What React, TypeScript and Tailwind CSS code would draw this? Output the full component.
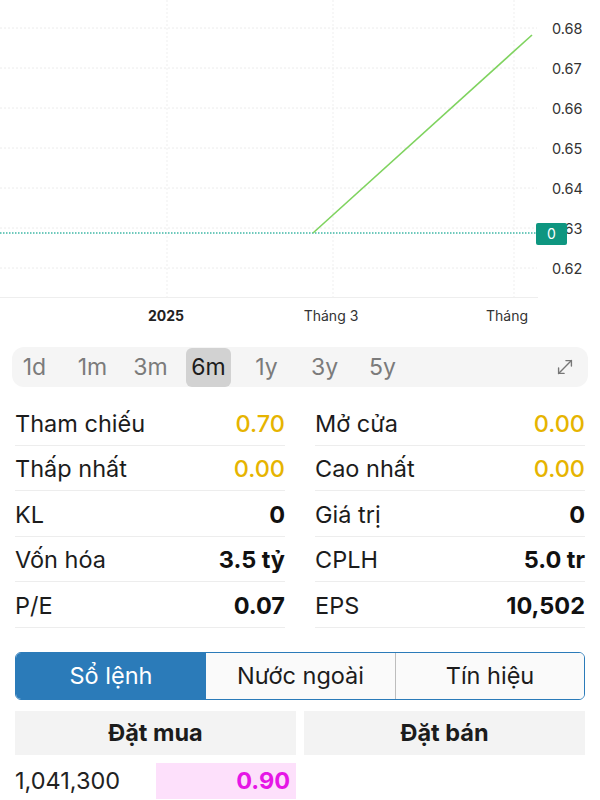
import { MoveDiagonal } from "lucide-react";

const periods = ["1d", "1m", "3m", "6m", "1y", "3y", "5y"];

const stats: [string, string, string, string, string, string][] = [
  ["Tham chiếu", "0.70", "text-[#e6b400] font-medium", "Mở cửa", "0.00", "text-[#e6b400] font-medium"],
  ["Thấp nhất", "0.00", "text-[#e6b400] font-medium", "Cao nhất", "0.00", "text-[#e6b400] font-medium"],
  ["KL", "0", "text-[#111] font-bold", "Giá trị", "0", "text-[#111] font-bold"],
  ["Vốn hóa", "3.5 tỷ", "text-[#111] font-bold", "CPLH", "5.0 tr", "text-[#111] font-bold"],
  ["P/E", "0.07", "text-[#111] font-bold", "EPS", "10,502", "text-[#111] font-bold"],
];

const yLabels = ["0.68", "0.67", "0.66", "0.65", "0.64", "0.63", "0.62"];

function Chart() {
  const font = "Inter, 'Noto Sans', sans-serif";
  return (
    <svg width="600" height="340" viewBox="0 0 600 340" className="block">
      {yLabels.map((_, i) => (
        <line key={i} x1="0" x2="537" y1={28 + i * 40} y2={28 + i * 40} stroke="#ececec" strokeWidth="1" strokeDasharray="2 2" />
      ))}
      {[167, 333, 514].map((x) => (
        <line key={x} x1={x} x2={x} y1="0" y2="297" stroke="#efefef" strokeWidth="1" strokeDasharray="2 2" />
      ))}
      <line x1="0" x2="538" y1="297.5" y2="297.5" stroke="#eeeeee" strokeWidth="1" />
      <line x1="0" x2="537" y1="233" y2="233" stroke="#3fb8a6" strokeWidth="1.5" strokeDasharray="1.5 1.5" />
      <line x1="313" y1="233" x2="532" y2="35" stroke="#7fd35f" strokeWidth="1.6" />
      {yLabels.map((l, i) => (
        <text key={l} x="552" y={34 + i * 40} fontSize="14.5" fill="#333" fontFamily={font}>
          {l}
        </text>
      ))}
      <rect x="536" y="223" width="31" height="22" rx="2" fill="#0e9680" />
      <text x="551.5" y="239" fontSize="14" fill="#fff" textAnchor="middle" fontFamily={font}>
        0
      </text>
      <text x="166" y="321" fontSize="14" fontWeight="700" fill="#222" textAnchor="middle" fontFamily={font}>
        2025
      </text>
      <text x="331" y="321" fontSize="14" fill="#333" textAnchor="middle" fontFamily={font}>
        Tháng 3
      </text>
      <text x="486" y="321" fontSize="14" fill="#333" fontFamily={font}>
        Tháng
      </text>
    </svg>
  );
}

export default function App() {
  return (
    <div className="w-[600px] h-[800px] overflow-hidden bg-white text-[#1c1c1c]" style={{ fontFamily: "Inter, 'Noto Sans', sans-serif" }}>
      <Chart />

      <div className="mx-3 mt-[7px] h-[40px] rounded-xl bg-[#f5f5f5] flex items-center pr-[12px]">
        <div className="flex items-center gap-[13px]">
          {periods.map((p) => (
            <div
              key={p}
              className={
                p === "6m"
                  ? "w-[45px] h-[39px] rounded-md bg-[#d2d2d2] flex items-center justify-center text-[23px] text-[#1c1c1c]"
                  : "w-[45px] h-[39px] flex items-center justify-center text-[23px] text-[#7b7b7b]"
              }
            >
              {p}
            </div>
          ))}
        </div>
        <MoveDiagonal className="ml-auto w-[22px] h-[22px] text-[#777]" strokeWidth={1.5} />
      </div>

      <div className="grid grid-cols-2 gap-x-[30px] px-[15px] mt-[13px]">
        {stats.map(([l1, v1, c1, l2, v2, c2]) => (
          <>
            <div key={l1} className="h-[45.5px] pt-[2px] flex items-center justify-between border-b border-[#ededed] text-[23.5px]">
              <span>{l1}</span>
              <span className={c1}>{v1}</span>
            </div>
            <div key={l2} className="h-[45.5px] pt-[2px] flex items-center justify-between border-b border-[#ededed] text-[23.5px]">
              <span>{l2}</span>
              <span className={c2}>{v2}</span>
            </div>
          </>
        ))}
      </div>

      <div className="mx-[15px] mt-[24px] h-[48px] flex rounded-md border border-[#2b7bb9] overflow-hidden text-[23.5px]">
        <div className="w-[190px] bg-[#2b7bb9] text-white flex items-center justify-center">Sổ lệnh</div>
        <div className="w-[190px] bg-[#fafafa] flex items-center justify-center border-r border-[#bdbdbd]">Nước ngoài</div>
        <div className="flex-1 bg-[#fafafa] flex items-center justify-center">Tín hiệu</div>
      </div>

      <div className="mx-[15px] mt-[11px] grid grid-cols-2 gap-x-[8px]">
        <div className="h-[44px] bg-[#f3f3f3] flex items-center justify-center font-bold text-[23.5px]">Đặt mua</div>
        <div className="h-[44px] bg-[#f3f3f3] flex items-center justify-center font-bold text-[23.5px]">Đặt bán</div>
      </div>

      <div className="mx-[15px] mt-[8px] grid grid-cols-2 gap-x-[8px]">
        <div className="flex items-center h-[36px]">
          <span className="w-[141px] text-[23.5px] text-[#222]">1,041,300</span>
          <div className="flex-1 h-full bg-[#fde0fb] flex items-center justify-end pr-[6px] text-[23.5px] font-bold text-[#e616e6]">0.90</div>
        </div>
        <div />
      </div>
    </div>
  );
}
